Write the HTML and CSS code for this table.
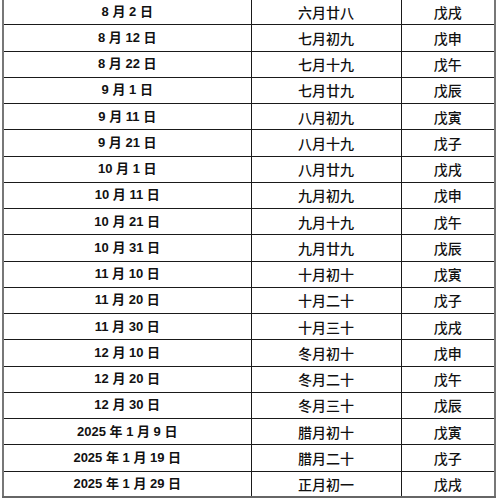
FILE: index.html
```html
<!DOCTYPE html>
<html lang="zh">
<head>
<meta charset="utf-8">
<link rel="stylesheet" href="styles.css">
</head>
<body>
<table class="cal">
<colgroup><col class="c1"><col class="c2"><col class="c3"></colgroup>
<tbody>
<tr><td class="d">8 月 2 日</td><td>六月廿八</td><td>戊戌</td></tr>
<tr><td class="d">8 月 12 日</td><td>七月初九</td><td>戊申</td></tr>
<tr><td class="d">8 月 22 日</td><td>七月十九</td><td>戊午</td></tr>
<tr><td class="d">9 月 1 日</td><td>七月廿九</td><td>戊辰</td></tr>
<tr><td class="d">9 月 11 日</td><td>八月初九</td><td>戊寅</td></tr>
<tr><td class="d">9 月 21 日</td><td>八月十九</td><td>戊子</td></tr>
<tr><td class="d">10 月 1 日</td><td>八月廿九</td><td>戊戌</td></tr>
<tr><td class="d">10 月 11 日</td><td>九月初九</td><td>戊申</td></tr>
<tr><td class="d">10 月 21 日</td><td>九月十九</td><td>戊午</td></tr>
<tr><td class="d">10 月 31 日</td><td>九月廿九</td><td>戊辰</td></tr>
<tr><td class="d">11 月 10 日</td><td>十月初十</td><td>戊寅</td></tr>
<tr><td class="d">11 月 20 日</td><td>十月二十</td><td>戊子</td></tr>
<tr><td class="d">11 月 30 日</td><td>十月三十</td><td>戊戌</td></tr>
<tr><td class="d">12 月 10 日</td><td>冬月初十</td><td>戊申</td></tr>
<tr><td class="d">12 月 20 日</td><td>冬月二十</td><td>戊午</td></tr>
<tr><td class="d">12 月 30 日</td><td>冬月三十</td><td>戊辰</td></tr>
<tr><td class="d">2025 年 1 月 9 日</td><td>腊月初十</td><td>戊寅</td></tr>
<tr><td class="d">2025 年 1 月 19 日</td><td>腊月二十</td><td>戊子</td></tr>
<tr><td class="d">2025 年 1 月 29 日</td><td>正月初一</td><td>戊戌</td></tr>
</tbody>
</table>
</body>
</html>
```
FILE: styles.css
```css
html, body {
  margin: 0;
  padding: 0;
  background: #fff;
}
body {
  padding-left: 2px;
  overflow: hidden;
}
.cal {
  margin-top: -2px;
  border-collapse: collapse;
  table-layout: fixed;
  width: 494px;
  font-family: "Noto Sans CJK SC", "Noto Sans", sans-serif;
  color: #111;
}
.c1 { width: 248px; }
.c2 { width: 150px; }
.c3 { width: 94px; }
.cal tr {
  height: 26.25px;
}
.cal td {
  border: 1px solid #1a1a1a;
  padding: 0;
  text-align: center;
  vertical-align: middle;
  font-size: 14px;
  font-weight: 500;
  line-height: 16px;
  white-space: nowrap;
}
.cal tr td:first-child {
  border-left: 2px solid #777;
}
.cal tr td:last-child {
  border-right: 2px solid #777;
}
.cal tr:last-child td {
  border-bottom: 2px solid #666;
}
.cal td.d {
  font-family: "Liberation Sans", "Noto Sans CJK SC", sans-serif;
  font-weight: bold;
  font-size: 13px;
}
```
